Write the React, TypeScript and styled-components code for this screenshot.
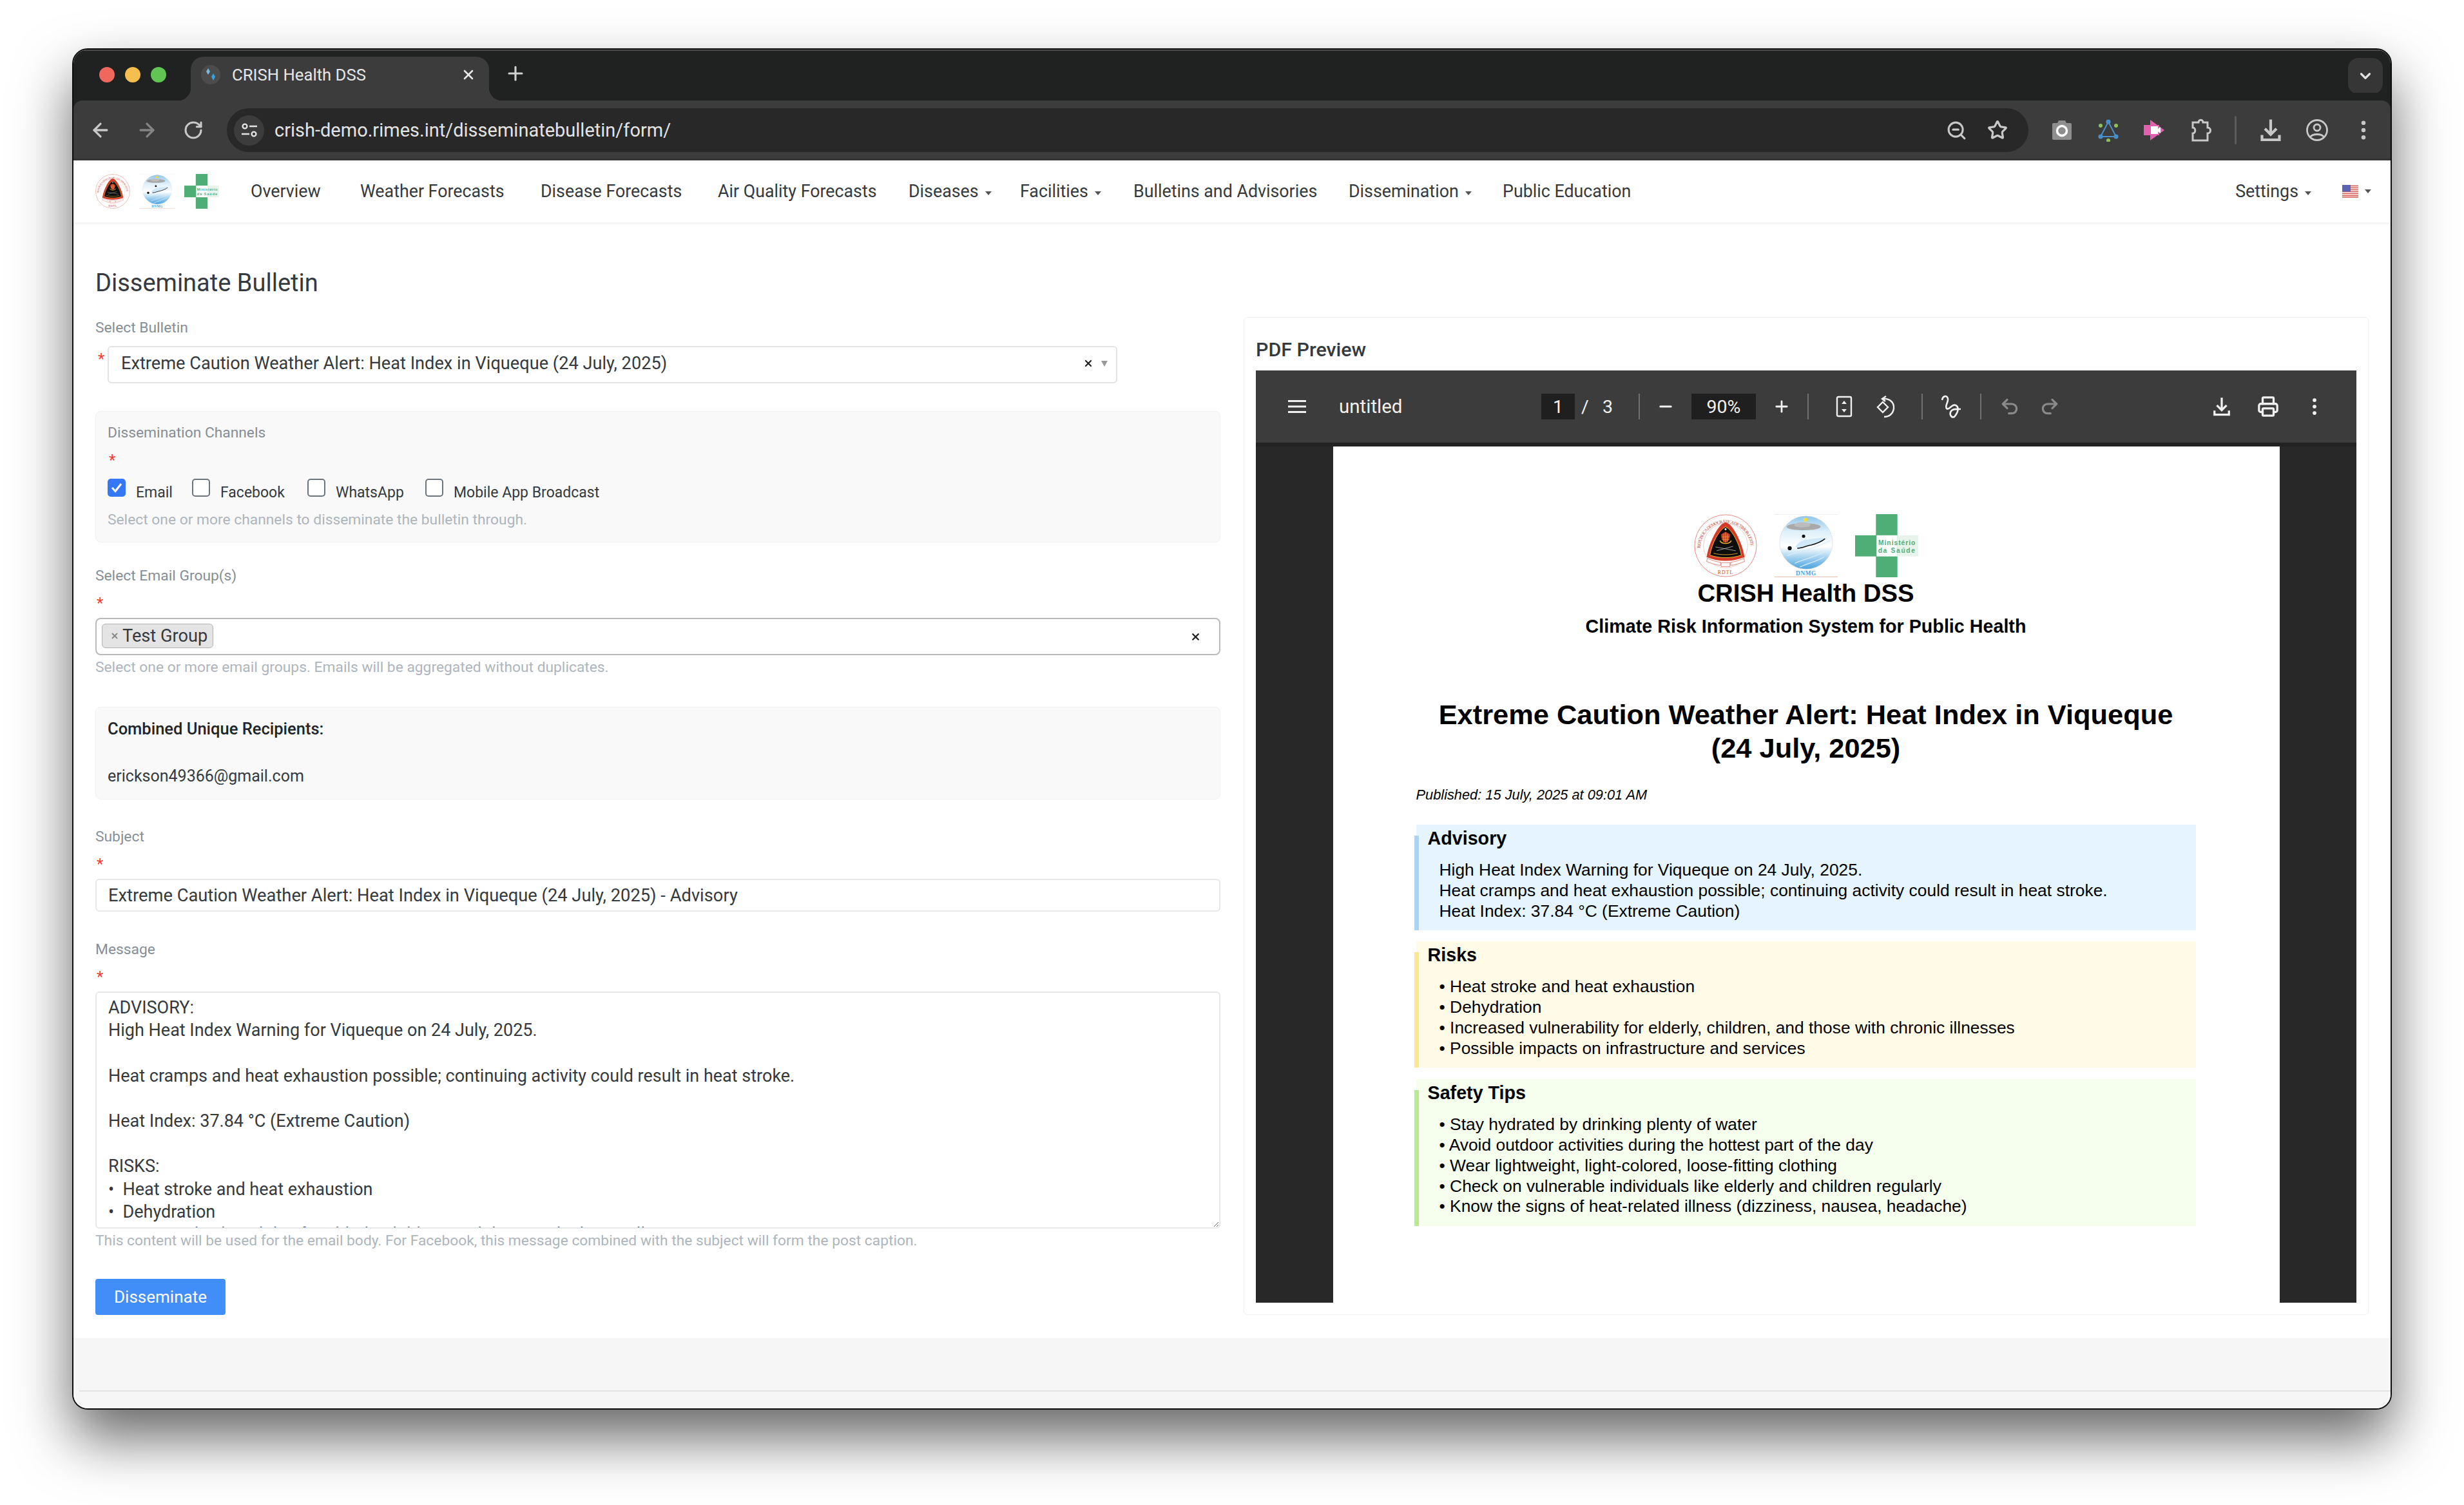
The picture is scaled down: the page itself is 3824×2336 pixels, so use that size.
import styled, { createGlobalStyle } from 'styled-components'
import { ArrowLeft, ArrowRight, RotateCw, ZoomOut, Star, X, Plus, ChevronDown, Undo2, Redo2, Printer, Minus } from 'lucide-react'

const GlobalStyle = createGlobalStyle`
  html, body {
    margin: 0;
    width: 3824px;
    height: 2336px;
    overflow: hidden;
    background: #fff;
  }
  * { box-sizing: border-box; }
  body { font-family: Roboto, "Liberation Sans", sans-serif; }
`

const Desktop = styled.div`
  width: 3824px;
  height: 2336px;
  padding: 75px 112px 148px;
`

const BrowserWindow = styled.div`
  height: 2113px;
  border: 2px solid #0c0c0c;
  border-radius: 24px;
  overflow: hidden;
  display: flex;
  flex-direction: column;
  background: #fff;
  box-shadow: 0 44px 88px rgba(0, 0, 0, 0.6);
`

/* browser chrome */
const TabStrip = styled.div`
  height: 79px;
  flex: none;
  background: #202221;
  border-top: 2px solid #4a4a4a;
  padding: 9px 12px 0 40px;
  display: flex;
  align-items: flex-start;
`

const Lights = styled.div`
  display: flex;
  gap: 16px;
  margin: 16px 38px 0 0;
`

const Light = styled.span<{ $c: string }>`
  width: 24px;
  height: 24px;
  border-radius: 50%;
  background: ${(p) => p.$c};
`

const Tab = styled.div`
  position: relative;
  width: 463px;
  height: 68px;
  background: #3c3c3c;
  border-radius: 20px 20px 0 0;
  display: flex;
  align-items: center;
  padding: 0 20px 12px 15px;
  color: #e6e6e6;
  font-size: 25.7px;
  &::before, &::after {
    content: '';
    position: absolute;
    bottom: 0;
    width: 20px;
    height: 20px;
  }
  &::before {
    left: -20px;
    background: radial-gradient(circle at 0 0, transparent 20px, #3c3c3c 20.5px);
  }
  &::after {
    right: -20px;
    background: radial-gradient(circle at 100% 0, transparent 20px, #3c3c3c 20.5px);
  }
`

const Favicon = styled.svg`
  width: 32px;
  height: 32px;
  margin-right: 17px;
  flex: none;
`

const TabTitle = styled.span`
  flex: 1;
`

const NewTab = styled.span`
  display: flex;
  margin: 9px 0 0 24px;
  color: #d0d0d0;
`

const TabMenu = styled.div`
  margin-left: auto;
  width: 54px;
  height: 56px;
  border-radius: 16px;
  background: #363636;
  display: flex;
  align-items: center;
  justify-content: center;
  margin-top: 2px;
  color: #e0e0e0;
`

const Toolbar = styled.div`
  height: 93px;
  flex: none;
  background: #3c3c3c;
  border-radius: 14px 14px 0 0;
  padding: 12px 0 0 6px;
  display: flex;
  align-items: flex-start;
  box-shadow: -12px -12px 0 #202221, 12px -12px 0 #202221;
  border-bottom: 3px solid #353535;
`

const ToolBtn = styled.span<{ $c?: string; $w?: number }>`
  width: ${(p) => p.$w || 72}px;
  height: 68px;
  flex: none;
  display: flex;
  align-items: center;
  justify-content: center;
  color: ${(p) => p.$c || '#c8c8c8'};
`

const Omnibox = styled.div`
  width: 2796px;
  height: 68px;
  flex: none;
  margin: 0 16px;
  background: #282828;
  border-radius: 34px;
  display: flex;
  align-items: center;
  padding: 0 16px 0 11px;
`

const SiteInfo = styled.span`
  width: 47px;
  height: 47px;
  border-radius: 50%;
  background: #3c3c3c;
  display: flex;
  align-items: center;
  justify-content: center;
  margin-right: 16px;
`

const Url = styled.span`
  color: #e3e3e3;
  font-size: 29px;
  flex: 1;
`

const ToolDivider = styled.span`
  width: 3px;
  height: 44px;
  margin: 12px 17px 0 16px;
  background: #5c5c5c;
  border-radius: 2px;
  flex: none;
`

/* site nav */
const NavBar = styled.nav`
  height: 99px;
  flex: none;
  border-bottom: 3px solid #f5f5f5;
  display: flex;
  align-items: center;
  padding: 0 30px 0 34px;
  color: #343a40;
  font-size: 26.8px;
`

const LogoRow = styled.div<{ $gap: number; $size: number }>`
  display: flex;
  gap: ${(p) => p.$gap}px;
  flex: none;
  & > svg {
    width: ${(p) => p.$size}px;
    height: ${(p) => p.$size}px;
    display: block;
  }
`

const NavLinks = styled.div`
  display: flex;
  align-items: center;
  margin-left: 49px;
`

const NavLink = styled.span<{ $w: number }>`
  width: ${(p) => p.$w}px;
  flex: none;
  white-space: nowrap;
`

const Caret = styled.span`
  display: inline-block;
  width: 0;
  height: 0;
  margin-left: 10px;
  vertical-align: 3px;
  border-left: 5px solid transparent;
  border-right: 5px solid transparent;
  border-top: 6px solid #555;
`

const NavRight = styled.div`
  margin-left: auto;
  display: flex;
  align-items: center;
`

const FlagBox = styled.svg`
  width: 25px;
  height: 20px;
  margin-left: 48px;
`

/* page */
const Main = styled.main`
  flex: none;
  height: 1729px;
  padding: 69px 34px 0;
`

const PageTitle = styled.h1`
  margin: 0 0 33px;
  font-size: 38px;
  font-weight: 400;
  line-height: 44px;
  color: #343a40;
`

const Columns = styled.div`
  display: grid;
  grid-template-columns: 1746px 1746px;
  gap: 36px;
  margin-top: -2px;
  align-items: start;
`

const FormCol = styled.div`
  padding-top: 2px;
`

const FieldLabel = styled.label`
  display: block;
  font-size: 22.8px;
  line-height: 30px;
  color: #868e96;
`

const Required = styled.div`
  height: 50px;
  padding-top: 15px;
  font-size: 24px;
  line-height: 24px;
  color: #fa3a2f;
  padding-left: 2px;
`

const SelectRow = styled.div`
  display: flex;
  align-items: flex-start;
  margin: 13px 0 43px;
  width: 1586px;
`

const RowStar = styled.span`
  width: 19px;
  flex: none;
  padding: 8px 0 0 4px;
  font-size: 24px;
  line-height: 24px;
  color: #fa3a2f;
`

const SelectBox = styled.div`
  flex: 1;
  height: 58px;
  border: 2px solid #e2e4e7;
  border-radius: 6px;
  display: flex;
  align-items: center;
  padding: 0 13px 4px 19px;
  font-size: 27.2px;
  color: #343a40;
`

const SelectText = styled.span`
  flex: 1;
`

const ClearX = styled.span`
  display: flex;
  color: #222;
`

const Arrow = styled.span`
  width: 0;
  height: 0;
  margin-left: 12px;
  border-left: 5.5px solid transparent;
  border-right: 5.5px solid transparent;
  border-top: 9px solid #999;
`

const Panel = styled.div<{ $h: number }>`
  height: ${(p) => p.$h}px;
  background: #f9f9f9;
  border: 1px solid #f1f1f1;
  border-radius: 8px;
  padding: 18px 18px 0;
`

const ChannelRow = styled.div`
  display: flex;
  margin-top: 6px;
  height: 49px;
`

const Channel = styled.div<{ $w: number }>`
  width: ${(p) => p.$w}px;
  display: flex;
  align-items: flex-start;
  gap: 16px;
  font-size: 23px;
  line-height: 28px;
  color: #343a40;
`

const ChannelName = styled.span`
  margin-top: 8px;
`

const CheckBox = styled.span<{ $on?: boolean }>`
  width: 28px;
  height: 28px;
  flex: none;
  border-radius: 5px;
  border: 2px solid ${(p) => (p.$on ? '#3478f6' : '#6c757d')};
  background: ${(p) => (p.$on ? '#3478f6' : '#fff')};
  display: flex;
  align-items: center;
  justify-content: center;
`

const Hint = styled.div<{ $mt?: number }>`
  margin-top: ${(p) => p.$mt || 0}px;
  font-size: 22.8px;
  line-height: 30px;
  color: #adb5bd;
`

const Block = styled.div<{ $mt: number }>`
  margin-top: ${(p) => p.$mt}px;
`

const MultiBox = styled.div`
  height: 58px;
  border: 2px solid #b8bbbe;
  border-radius: 8px;
  display: flex;
  align-items: center;
  padding: 0 28px 0 8px;
  font-size: 27.2px;
  color: #343a40;
`

const Chip = styled.span`
  height: 38px;
  padding: 0 8px 0 12px;
  margin-top: -2px;
  background: #e4e4e4;
  border: 1px solid #b3b3b3;
  border-radius: 6px;
  display: flex;
  align-items: center;
  gap: 5px;
  margin-right: auto;
`

const ChipX = styled.span`
  display: flex;
  color: #8a8a8a;
`

const StrongText = styled.div`
  font-size: 25.5px;
  line-height: 30px;
  font-weight: 500;
  color: #212529;
`

const PlainText = styled.div`
  margin-top: 44px;
  font-size: 25px;
  line-height: 30px;
  color: #343a40;
`

const TextInput = styled.input`
  display: block;
  width: 100%;
  height: 51px;
  border: 2px solid #e6e8ea;
  border-radius: 6px;
  padding: 0 18px;
  outline: none;
  font: 400 27.3px Roboto, sans-serif;
  color: #343a40;
  background: #fff;
`

const MessageArea = styled.textarea`
  display: block;
  width: 100%;
  height: 368px;
  border: 2px solid #e6e8ea;
  border-radius: 6px;
  padding: 6px 18px 0;
  outline: none;
  resize: vertical;
  overflow: hidden;
  font: 400 27px/35.2px Roboto, sans-serif;
  color: #343a40;
  background: #fff;
`

const SendButton = styled.button`
  display: block;
  width: 202px;
  height: 56px;
  margin-top: 44px;
  padding: 0;
  border: none;
  border-radius: 4px;
  background: #428ef8;
  color: #fff;
  font: 400 26px Roboto, sans-serif;
`

/* pdf side */
const PreviewCard = styled.section`
  height: 1549px;
  border: 1px solid #f0f0f0;
  border-radius: 6px;
  padding: 30px 18px 0;
`

const PreviewTitle = styled.h2`
  margin: 0 0 12px;
  font-size: 30.4px;
  line-height: 40px;
  font-weight: 500;
  color: #343a40;
`

const Viewer = styled.div`
  height: 1447px;
  background: #282828;
  overflow: hidden;
`

const PdfBar = styled.div`
  height: 112px;
  background: #3c3c3c;
  display: flex;
  align-items: center;
  color: #f1f1f1;
  padding: 0 29px 0 50px;
  font-size: 28.5px;
  box-shadow: 0 6px 0 #222;
`

const PdfName = styled.span`
  width: 314px;
  margin-left: 51px;
  font-size: 29.5px;
`

const PdfField = styled.span<{ $w: number }>`
  width: ${(p) => p.$w}px;
  height: 40px;
  background: #1f1f1f;
  display: flex;
  align-items: center;
  justify-content: center;
  flex: none;
`

const PdfSep = styled.span<{ $ml: number; $mr?: number }>`
  width: 2px;
  height: 40px;
  flex: none;
  background: #6f6f6f;
  margin-left: ${(p) => p.$ml}px;
  margin-right: ${(p) => p.$mr || 0}px;
`

const PdfIcon = styled.span<{ $w: number; $c?: string }>`
  width: ${(p) => p.$w}px;
  flex: none;
  display: flex;
  justify-content: center;
  color: ${(p) => p.$c || '#f1f1f1'};
`

const PdfSpacer = styled.span`
  flex: 1;
`

const PageCount = styled.span`
  margin-left: 10px;
  width: 80px;
  white-space: pre;
`

const SheetWrap = styled.div`
  padding-top: 6px;
  display: flex;
  justify-content: center;
`

const Sheet = styled.article`
  width: 1469px;
  height: 1400px;
  background: #fff;
  padding: 105px 130px 0 129px;
  color: #000;
  font-family: "Liberation Sans", Arial, sans-serif;
`

const SheetLogos = styled.div`
  display: flex;
  justify-content: center;
`

const SheetBrand = styled.div`
  font-size: 38.3px;
  font-weight: 700;
  line-height: 50px;
  text-align: center;
`

const SheetTag = styled.div`
  margin-top: 6px;
  font-size: 28.7px;
  font-weight: 700;
  line-height: 40px;
  text-align: center;
`

const SheetTitle = styled.h1`
  margin: 91px 0 0;
  font-size: 43.4px;
  font-weight: 700;
  line-height: 52px;
  text-align: center;
`

const Published = styled.div`
  margin-top: 31px;
  font-size: 21.8px;
  font-style: italic;
  line-height: 32px;
`

const Callout = styled.div<{ $bg: string; $bar: string; $mt: number }>`
  position: relative;
  margin-top: ${(p) => p.$mt}px;
  background: ${(p) => p.$bg};
  padding: 3px 0 14px 18px;
  &::before {
    content: '';
    position: absolute;
    left: -3px;
    top: 17px;
    bottom: 0;
    width: 7px;
    background: ${(p) => p.$bar};
  }
`

const CalloutHead = styled.div`
  font-size: 28.7px;
  font-weight: 700;
  line-height: 36px;
`

const CalloutBody = styled.div`
  margin-top: 16px;
  padding-left: 18px;
  font-size: 26.4px;
  line-height: 31.75px;
`

const Footer = styled.footer`
  flex: 1;
  background: #f6f6f6;
  padding: 81px 0 0 9px;
`

const FooterRule = styled.div`
  height: 2px;
  background: #e2e2e2;
`

const Emblem = () => (
  <svg viewBox="0 0 100 100">
    <defs>
      <path id="ringTop" d="M 10 54 A 40 40 0 1 1 90 54" />
    </defs>
    <circle cx="50" cy="50" r="49" fill="#fff" stroke="#e27a70" strokeWidth="0.9" />
    <circle cx="50" cy="50" r="35" fill="none" stroke="#e79a92" strokeWidth="0.5" />
    <text fontFamily="Liberation Serif, serif" fontSize="7" fill="#c9453a">
      <textPath href="#ringTop" textLength="122">REPÚBLICA DEMOCRÁTICA DE TIMOR-LESTE</textPath>
    </text>
    <path d="M50 13 C57 15 62 22 67 31 C73 42 78 55 80 68 C70 72 60 74 50 74 C40 74 30 72 20 68 C22 55 27 42 33 31 C38 22 43 15 50 13Z" fill="#d5392a" />
    <path d="M50 20 C56 23 61 30 65 37 C70 46 73 55 75 65 C66 68 58 69 50 69 C42 69 34 68 25 65 C27 55 30 46 35 37 C39 30 44 23 50 20Z" fill="#0d0d0d" stroke="#f0b92d" strokeWidth="1" />
    <path d="M43 32 C43 38 45 44 50 45 C55 44 57 38 57 32 L50 28Z" fill="#c8372a" />
    <path d="M44 36H56M44 40H56M47 31V44M50 29V45M53 31V44" stroke="#e9b23a" strokeWidth="0.7" />
    <path d="M41 42 C44 48 56 48 59 42" fill="none" stroke="#e2a92a" strokeWidth="1.6" />
    <path d="M34 52 L66 58 M36 58 L62 51" stroke="#d8d8d8" strokeWidth="0.7" />
    <path d="M31 62 C42 65 58 65 69 62" fill="none" stroke="#e2a92a" strokeWidth="0.9" />
    <circle cx="50" cy="24" r="1.5" fill="#fff" />
    <path d="M21 70 C30 74 38 76 42 76 L42 81 C36 81 27 78 20 75Z M58 76 C62 76 70 74 79 70 L80 75 C73 78 64 81 58 81Z M43 77 H57 V83 H43Z" fill="#fff" stroke="#d5574b" strokeWidth="0.7" />
    <text x="50" y="95" textAnchor="middle" fontFamily="Liberation Serif, serif" fontSize="8" fill="#c9453a" letterSpacing="1">RDTL</text>
  </svg>
)

const Dnmg = () => (
  <svg viewBox="0 0 100 100">
    <defs>
      <linearGradient id="dnmgSky" x1="0" y1="0" x2="0" y2="1">
        <stop offset="0" stopColor="#8fc6ea" />
        <stop offset="0.3" stopColor="#dff0fa" />
        <stop offset="0.58" stopColor="#ffffff" />
        <stop offset="0.78" stopColor="#a5d2ef" />
        <stop offset="1" stopColor="#4ba3e0" />
      </linearGradient>
    </defs>
    <rect width="100" height="100" fill="#fff" />
    <path d="M0 0.5H100" stroke="#eeeeee" strokeWidth="1" />
    <path d="M0 99.4H100" stroke="#e8b5a8" strokeWidth="1" />
    <circle cx="50" cy="45" r="42" fill="url(#dnmgSky)" stroke="#c9ced2" strokeWidth="0.5" />
    <circle cx="49" cy="9" r="3.2" fill="#f5dc3c" />
    <ellipse cx="46" cy="20" rx="27" ry="5.5" fill="#a9a9a9" />
    <ellipse cx="44" cy="17" rx="13" ry="4" fill="#bdbdbd" />
    <path d="M33 52 C36 45 44 41 54 40 C62 39 74 36 80 39 C74 44 62 48 53 49 C46 52 40 55 33 52Z" fill="#cfe9f9" />
    <path d="M36 54 C44 54 50 50 58 49 C66 47 74 44 80 39" fill="none" stroke="#111" strokeWidth="1.6" />
    <circle cx="46" cy="35" r="2.6" fill="#111" />
    <circle cx="24" cy="54" r="3.2" fill="#111" />
    <path d="M20 66 C34 60 56 58 88 42" fill="none" stroke="#d9edf9" strokeWidth="1.2" />
    <path d="M32 78 C44 72 60 70 82 58 M40 84 C52 78 64 76 78 68" fill="none" stroke="#d9edf9" strokeWidth="1.2" />
    <text x="50" y="97" textAnchor="middle" fontFamily="Liberation Serif, serif" fontWeight="700" fontSize="9.5" letterSpacing="0.6" fill="#45a4e2">DNMG</text>
  </svg>
)

const MoH = () => (
  <svg viewBox="0 0 100 100">
    <rect x="33" y="0" width="34" height="100" fill="#4fad76" />
    <rect x="0" y="33.5" width="34" height="33.5" fill="#4fad76" />
    <rect x="34" y="33.5" width="33" height="33.5" fill="#fff" />
    <rect x="67" y="33.5" width="33" height="33.5" fill="#e8f3ec" />
    <text x="66.5" y="48.5" textAnchor="middle" fontFamily="Liberation Sans, sans-serif" fontWeight="700" fontSize="10.5" letterSpacing="1" fill="#4fad76">Ministério</text>
    <text x="66.5" y="61" textAnchor="middle" fontFamily="Liberation Sans, sans-serif" fontWeight="700" fontSize="10.5" letterSpacing="1.7" fill="#4fad76">da Saúde</text>
  </svg>
)

const KebabIcon = ({ size, color }: { size: number; color: string }) => (
  <svg width={size} height={size} viewBox="0 0 24 24" fill={color}>
    <circle cx="12" cy="4" r="2.3" />
    <circle cx="12" cy="12" r="2.3" />
    <circle cx="12" cy="20" r="2.3" />
  </svg>
)

const TrayDownload = ({ size, sw }: { size: number; sw: number }) => (
  <svg width={size} height={size} viewBox="0 0 24 24" fill="none" stroke="currentColor" strokeWidth={sw}>
    <path d="M12 1V16M6 10.5L12 16.5L18 10.5" />
    <path d="M3 17V22H21V17" />
  </svg>
)

const bullets = {
  risks: [
    'Heat stroke and heat exhaustion',
    'Dehydration',
    'Increased vulnerability for elderly, children, and those with chronic illnesses',
    'Possible impacts on infrastructure and services',
  ],
  tips: [
    'Stay hydrated by drinking plenty of water',
    'Avoid outdoor activities during the hottest part of the day',
    'Wear lightweight, light-colored, loose-fitting clothing',
    'Check on vulnerable individuals like elderly and children regularly',
    'Know the signs of heat-related illness (dizziness, nausea, headache)',
  ],
}

const messageText = `ADVISORY:
High Heat Index Warning for Viqueque on 24 July, 2025.

Heat cramps and heat exhaustion possible; continuing activity could result in heat stroke.

Heat Index: 37.84 °C (Extreme Caution)

RISKS:
•  Heat stroke and heat exhaustion
•  Dehydration
•  Increased vulnerability for elderly, children, and those with chronic illnesses`

const App = () => {
  return (
    <>
      <GlobalStyle />
      <Desktop>
        <BrowserWindow>
          <TabStrip>
            <Lights>
              <Light $c="#f0675d" />
              <Light $c="#f6bd4f" />
              <Light $c="#61c554" />
            </Lights>
            <Tab>
              <Favicon viewBox="0 0 32 32">
                <circle cx="16" cy="16" r="15" fill="#4c4c4c" />
                <path d="M12 6l3 5-3 5-3-5z" fill="#7fb6d8" />
                <path d="M20 14l3 5-3 6-3-6z" fill="#35a3dd" />
              </Favicon>
              <TabTitle>CRISH Health DSS</TabTitle>
              <ClearX>
                <X size={24} strokeWidth={2.6} color="#e8e8e8" />
              </ClearX>
            </Tab>
            <NewTab>
              <Plus size={34} strokeWidth={2.2} />
            </NewTab>
            <TabMenu>
              <ChevronDown size={26} strokeWidth={3} />
            </TabMenu>
          </TabStrip>
          <Toolbar>
            <ToolBtn><ArrowLeft size={34} strokeWidth={2.3} /></ToolBtn>
            <ToolBtn $c="#848484"><ArrowRight size={34} strokeWidth={2.3} /></ToolBtn>
            <ToolBtn><RotateCw size={32} strokeWidth={2.3} /></ToolBtn>
            <Omnibox>
              <SiteInfo>
                <svg width="28" height="28" viewBox="0 0 28 28" fill="none" stroke="#e3e3e3" strokeWidth="2.4">
                  <circle cx="7" cy="8" r="3.4" />
                  <path d="M14 8H26M2 20H14" />
                  <circle cx="21" cy="20" r="3.4" />
                </svg>
              </SiteInfo>
              <Url>crish-demo.rimes.int/disseminatebulletin/form/</Url>
              <ToolBtn $w={64}><ZoomOut size={33} strokeWidth={2.2} /></ToolBtn>
              <ToolBtn $w={64}><Star size={32} strokeWidth={2.4} /></ToolBtn>
            </Omnibox>
            <ToolBtn>
              <svg width="36" height="36" viewBox="0 0 36 36">
                <path d="M3 9a2 2 0 0 1 2-2h6l2-4h10l2 4h6a2 2 0 0 1 2 2v22a2 2 0 0 1-2 2H5a2 2 0 0 1-2-2z" fill="#8e8e8e" />
                <circle cx="18" cy="19" r="7.5" fill="none" stroke="#fff" strokeWidth="3.5" />
              </svg>
            </ToolBtn>
            <ToolBtn>
              <svg width="36" height="36" viewBox="0 0 36 36">
                <path d="M18 5L30 28H6Z" fill="none" stroke="#4a8ec9" strokeWidth="2" />
                <circle cx="18" cy="5" r="3.6" fill="#4a8ec9" />
                <circle cx="6" cy="28" r="3.6" fill="#4a8ec9" />
                <circle cx="30" cy="28" r="3.6" fill="#4a8ec9" />
                <circle cx="6" cy="11" r="3" fill="#8cc15e" />
                <circle cx="30" cy="11" r="3" fill="#8cc15e" />
                <circle cx="18" cy="34" r="3" fill="#8cc15e" />
              </svg>
            </ToolBtn>
            <ToolBtn>
              <svg width="36" height="36" viewBox="0 0 36 36">
                <path d="M11 2L33 18L11 34Z" fill="#e35fb0" />
                <rect x="1" y="10" width="24" height="16" fill="#e35fb0" />
                <path d="M12 12H23V24H12ZM23 16L27 13V23L23 20Z" fill="#fff" />
              </svg>
            </ToolBtn>
            <ToolBtn>
              <svg width="36" height="38" viewBox="0 0 36 38" fill="none" stroke="#c8c8c8" strokeWidth="3">
                <path d="M5 7H14C14 2 21 2 21 7H28V15C34 15 34 24 28 24V35H5V24C10 24 10 15 5 15Z" />
              </svg>
            </ToolBtn>
            <ToolDivider />
            <ToolBtn><TrayDownload size={36} sw={2.8} /></ToolBtn>
            <ToolBtn>
              <svg width="36" height="36" viewBox="0 0 36 36" fill="none" stroke="#c8c8c8" strokeWidth="2.8">
                <circle cx="18" cy="18" r="15.5" />
                <circle cx="18" cy="14" r="5" />
                <path d="M7 29C11 23 25 23 29 29" />
              </svg>
            </ToolBtn>
            <ToolBtn $w={72}><KebabIcon size={34} color="#c8c8c8" /></ToolBtn>
          </Toolbar>
          <NavBar>
            <LogoRow $gap={15} $size={54}>
              <Emblem />
              <Dnmg />
              <MoH />
            </LogoRow>
            <NavLinks>
              <NavLink $w={170}>Overview</NavLink>
              <NavLink $w={280}>Weather Forecasts</NavLink>
              <NavLink $w={275}>Disease Forecasts</NavLink>
              <NavLink $w={296}>Air Quality Forecasts</NavLink>
              <NavLink $w={173}>Diseases<Caret /></NavLink>
              <NavLink $w={176}>Facilities<Caret /></NavLink>
              <NavLink $w={334}>Bulletins and Advisories</NavLink>
              <NavLink $w={239}>Dissemination<Caret /></NavLink>
              <NavLink $w={240}>Public Education</NavLink>
            </NavLinks>
            <NavRight>
              <span>Settings<Caret /></span>
              <FlagBox viewBox="0 0 25 20">
                <rect width="25" height="20" fill="#f4f4f4" />
                <path d="M0 1.5H25M0 4.5H25M0 7.5H25M0 10.5H25M0 13.5H25M0 16.5H25M0 19H25" stroke="#d9574f" strokeWidth="1.5" />
                <rect width="13" height="10.5" fill="#5b63b0" />
              </FlagBox>
              <Caret />
            </NavRight>
          </NavBar>
          <Main>
            <PageTitle>Disseminate Bulletin</PageTitle>
            <Columns>
              <FormCol>
                <FieldLabel>Select Bulletin</FieldLabel>
                <SelectRow>
                  <RowStar>*</RowStar>
                  <SelectBox>
                    <SelectText>Extreme Caution Weather Alert: Heat Index in Viqueque (24 July, 2025)</SelectText>
                    <ClearX><X size={16} strokeWidth={3.4} /></ClearX>
                    <Arrow />
                  </SelectBox>
                </SelectRow>
                <Panel $h={204}>
                  <FieldLabel>Dissemination Channels</FieldLabel>
                  <Required>*</Required>
                  <ChannelRow>
                    <Channel $w={131}>
                      <CheckBox $on>
                        <svg width="22" height="22" viewBox="0 0 22 22" fill="none" stroke="#fff" strokeWidth="3">
                          <path d="M4 11L9 16.5L18 5" />
                        </svg>
                      </CheckBox>
                      <ChannelName>Email</ChannelName>
                    </Channel>
                    <Channel $w={179}><CheckBox /><ChannelName>Facebook</ChannelName></Channel>
                    <Channel $w={183}><CheckBox /><ChannelName>WhatsApp</ChannelName></Channel>
                    <Channel $w={300}><CheckBox /><ChannelName>Mobile App Broadcast</ChannelName></Channel>
                  </ChannelRow>
                  <Hint>Select one or more channels to disseminate the bulletin through.</Hint>
                </Panel>
                <Block $mt={37}>
                  <FieldLabel>Select Email Group(s)</FieldLabel>
                  <Required>*</Required>
                  <MultiBox>
                    <Chip>
                      <ChipX><X size={14} strokeWidth={3.4} /></ChipX>
                      Test Group
                    </Chip>
                    <ClearX><X size={17} strokeWidth={3.4} /></ClearX>
                  </MultiBox>
                  <Hint $mt={4}>Select one or more email groups. Emails will be aggregated without duplicates.</Hint>
                </Block>
                <Block $mt={46}>
                  <Panel $h={144}>
                    <StrongText>Combined Unique Recipients:</StrongText>
                    <PlainText>erickson49366@gmail.com</PlainText>
                  </Panel>
                </Block>
                <Block $mt={43}>
                  <FieldLabel>Subject</FieldLabel>
                  <Required>*</Required>
                  <TextInput readOnly value="Extreme Caution Weather Alert: Heat Index in Viqueque (24 July, 2025) - Advisory" />
                </Block>
                <Block $mt={44}>
                  <FieldLabel>Message</FieldLabel>
                  <Required>*</Required>
                  <MessageArea readOnly value={messageText} />
                  <Hint $mt={4}>This content will be used for the email body. For Facebook, this message combined with the subject will form the post caption.</Hint>
                </Block>
                <SendButton>Disseminate</SendButton>
              </FormCol>
              <PreviewCard>
                <PreviewTitle>PDF Preview</PreviewTitle>
                <Viewer>
                  <PdfBar>
                    <svg width="28" height="22" viewBox="0 0 28 22" fill="#f1f1f1">
                      <rect width="28" height="3" y="1" />
                      <rect width="28" height="3" y="9.5" />
                      <rect width="28" height="3" y="18" />
                    </svg>
                    <PdfName>untitled</PdfName>
                    <PdfField $w={52}>1</PdfField>
                    <PageCount>/   3</PageCount>
                    <PdfSep $ml={9} />
                    <PdfIcon $w={80}><Minus size={28} strokeWidth={2.6} /></PdfIcon>
                    <PdfField $w={100}>90%</PdfField>
                    <PdfIcon $w={80}><Plus size={28} strokeWidth={2.4} /></PdfIcon>
                    <PdfSep $ml={0} $mr={23} />
                    <PdfIcon $w={64}>
                      <svg width="26" height="34" viewBox="0 0 26 34" fill="none" stroke="#f1f1f1" strokeWidth="2.4">
                        <rect x="2" y="2" width="22" height="30" rx="2" />
                        <path d="M13 8L17 13H9ZM13 26L9 21H17Z" fill="#f1f1f1" stroke="none" />
                      </svg>
                    </PdfIcon>
                    <PdfIcon $w={64}>
                      <svg width="38" height="38" viewBox="0 0 38 38" fill="none" stroke="#f1f1f1" strokeWidth="2.4">
                        <path d="M15 12L23 20L15 28L7 20Z" />
                        <path d="M20 3L14 7L19 11M15 7C26 6 33 13 32 22C31 30 25 35 17 35" />
                      </svg>
                    </PdfIcon>
                    <PdfSep $ml={24} $mr={16} />
                    <PdfIcon $w={56}>
                      <svg width="34" height="38" viewBox="0 0 34 38" fill="none" stroke="#f1f1f1" strokeWidth="2.6">
                        <path d="M3 9C4 2 11 1 12 7C13 13 7 17 10 22C14 26 18 14 24 17C30 20 28 28 22 35C17 37 13 30 18 25C22 22 28 23 32 23" />
                      </svg>
                    </PdfIcon>
                    <PdfSep $ml={17} $mr={14} />
                    <PdfIcon $w={60} $c="#8a8a8a"><Undo2 size={32} strokeWidth={2.4} /></PdfIcon>
                    <PdfIcon $w={64} $c="#8a8a8a"><Redo2 size={32} strokeWidth={2.4} /></PdfIcon>
                    <PdfSpacer />
                    <PdfIcon $w={72}><TrayDownload size={30} sw={2.6} /></PdfIcon>
                    <PdfIcon $w={72}><Printer size={34} strokeWidth={2.3} /></PdfIcon>
                    <PdfIcon $w={72}><KebabIcon size={30} color="#f1f1f1" /></PdfIcon>
                  </PdfBar>
                  <SheetWrap>
                    <Sheet>
                      <SheetLogos>
                        <LogoRow $gap={27} $size={98}>
                          <Emblem />
                          <Dnmg />
                          <MoH />
                        </LogoRow>
                      </SheetLogos>
                      <SheetBrand>CRISH Health DSS</SheetBrand>
                      <SheetTag>Climate Risk Information System for Public Health</SheetTag>
                      <SheetTitle>
                        Extreme Caution Weather Alert: Heat Index in Viqueque
                        <br />
                        (24 July, 2025)
                      </SheetTitle>
                      <Published>Published: 15 July, 2025 at 09:01 AM</Published>
                      <Callout $bg="#e6f4ff" $bar="#a6d4ff" $mt={30}>
                        <CalloutHead>Advisory</CalloutHead>
                        <CalloutBody>
                          <div>High Heat Index Warning for Viqueque on 24 July, 2025.</div>
                          <div>Heat cramps and heat exhaustion possible; continuing activity could result in heat stroke.</div>
                          <div>Heat Index: 37.84 °C (Extreme Caution)</div>
                        </CalloutBody>
                      </Callout>
                      <Callout $bg="#fffbe6" $bar="#ffe58f" $mt={17}>
                        <CalloutHead>Risks</CalloutHead>
                        <CalloutBody>
                          {bullets.risks.map((r) => <div key={r}>• {r}</div>)}
                        </CalloutBody>
                      </Callout>
                      <Callout $bg="#f6ffed" $bar="#b7eb8f" $mt={18}>
                        <CalloutHead>Safety Tips</CalloutHead>
                        <CalloutBody>
                          {bullets.tips.map((t) => <div key={t}>• {t}</div>)}
                        </CalloutBody>
                      </Callout>
                    </Sheet>
                  </SheetWrap>
                </Viewer>
              </PreviewCard>
            </Columns>
          </Main>
          <Footer>
            <FooterRule />
          </Footer>
        </BrowserWindow>
      </Desktop>
    </>
  )
}

export default App
